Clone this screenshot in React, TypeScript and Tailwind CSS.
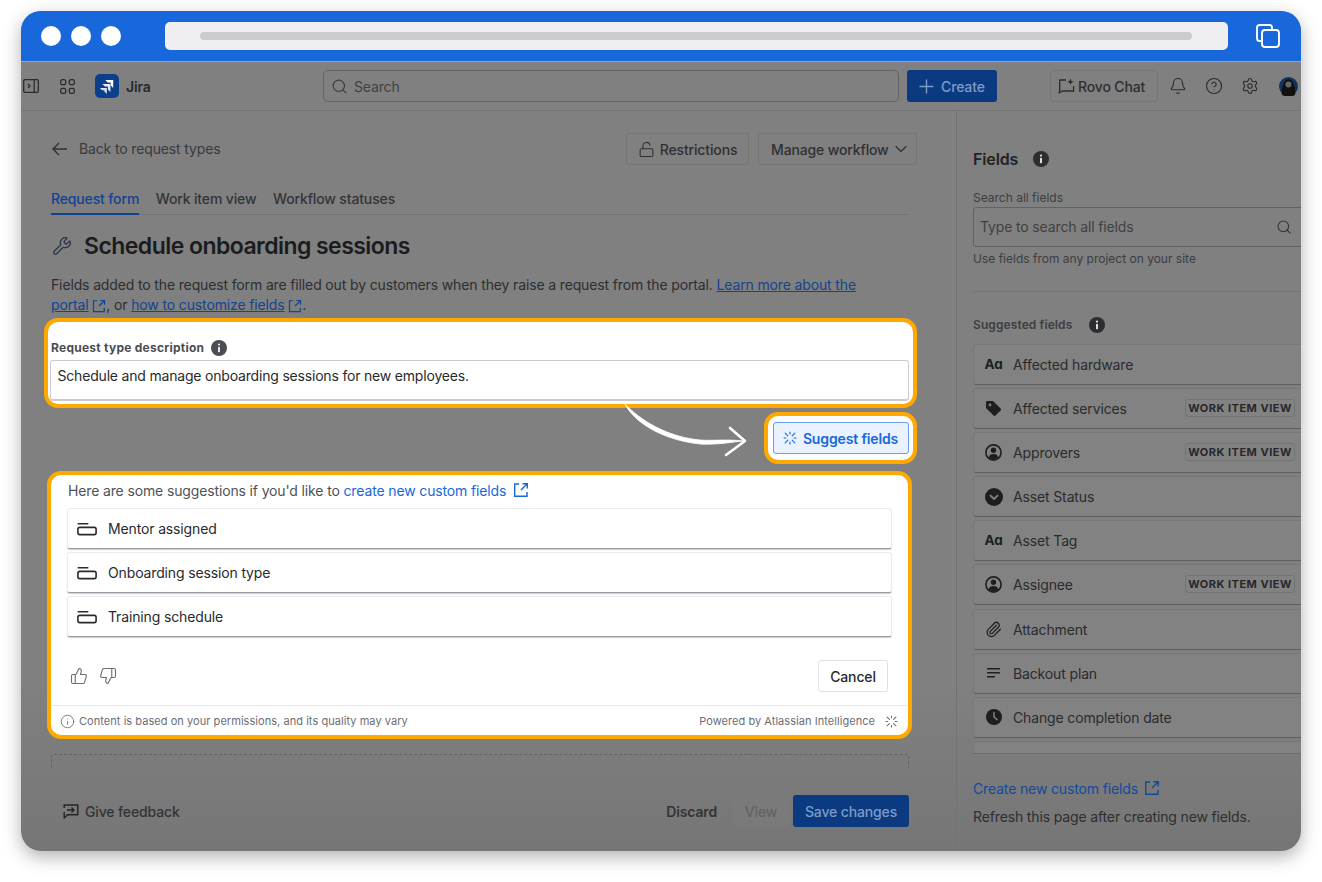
import React from "react";
import { ChevronDown, LockOpen, Search, Bell, CircleHelp, Settings, Wrench, ThumbsUp, ThumbsDown, Info, Paperclip } from "lucide-react";

const InfoSolid = ({ size = 16, color = "#2c2d30" }: { size?: number; color?: string }) => (
  <svg width={size} height={size} viewBox="0 0 16 16" className="shrink-0">
    <circle cx="8" cy="8" r="8" fill={color} />
    <circle cx="8" cy="4.6" r="1.1" fill="#fff" fillOpacity="0.85" />
    <rect x="7" y="6.8" width="2" height="5.4" rx="0.6" fill="#fff" fillOpacity="0.85" />
  </svg>
);

const AiIcon = ({ size = 14, color = "#1868DB" }: { size?: number; color?: string }) => (
  <svg width={size} height={size} viewBox="0 0 16 16" fill="none" stroke={color} strokeWidth="1.3" strokeLinecap="round" className="shrink-0">
    <path d="M2.5 2.5l3 3M13.5 2.5l-3 3M2.5 13.5l3-3M13.5 13.5l-3-3M8 1.2v2.2M8 12.6v2.2M1.2 8h2.2M12.6 8h2.2" />
  </svg>
);

const ExtLink = ({ size = 14, color = "#11458f", className = "" }: { size?: number; color?: string; className?: string }) => (
  <svg width={size} height={size} viewBox="0 0 16 16" fill="none" stroke={color} strokeWidth="1.4" className={"inline-block shrink-0 " + className}>
    <path d="M6 2H1.7v12.3h12.3V10" />
    <path d="M8 8l6-6M9.5 1.7h4.8v4.8" />
  </svg>
);

const FieldIcon = () => (
  <svg width="20" height="14" viewBox="0 0 20 14" fill="none" className="shrink-0">
    <rect x="0.5" y="1" width="11" height="1.6" rx="0.8" fill="#2a2b2e" />
    <rect x="0.9" y="5.4" width="18.2" height="7.2" rx="1.8" stroke="#2a2b2e" strokeWidth="1.6" />
  </svg>
);

const UserCircle = () => (
  <svg width="17" height="17" viewBox="0 0 17 17">
    <circle cx="8.5" cy="8.5" r="7.6" fill="none" stroke="#1d1e20" strokeWidth="1.6" />
    <circle cx="8.5" cy="6.2" r="2.7" fill="#1d1e20" />
    <path d="M3.6 13.5c.6-2.3 2.2-3.4 4.9-3.4s4.3 1.1 4.9 3.4a7.5 7.5 0 0 1-9.8 0z" fill="#1d1e20" />
  </svg>
);
const TagIcon = () => (
  <svg width="17" height="17" viewBox="0 0 17 17">
    <path d="M1 2.4C1 1.6 1.6 1 2.4 1H8l7.6 7.6c.5.5.5 1.3 0 1.8l-5.2 5.2c-.5.5-1.3.5-1.8 0L1 8z" fill="#1d1e20" />
    <circle cx="5" cy="5" r="1.4" fill="#808080" />
  </svg>
);
const ChevCircle = () => (
  <svg width="18" height="18" viewBox="0 0 18 18">
    <circle cx="9" cy="9" r="9" fill="#1d1e20" />
    <path d="M5.5 7.6L9 11l3.5-3.4" fill="none" stroke="#808080" strokeWidth="1.9" strokeLinecap="round" strokeLinejoin="round" />
  </svg>
);
const ClockSolid = () => (
  <svg width="16" height="16" viewBox="0 0 16 16">
    <circle cx="8" cy="8" r="8" fill="#1d1e20" />
    <path d="M8 3.6V8l3 2.6" fill="none" stroke="#808080" strokeWidth="1.5" strokeLinecap="round" />
  </svg>
);
const LinesIcon = () => (
  <svg width="14" height="10" viewBox="0 0 14 10" fill="#1d1e20">
    <rect width="13" height="1.5" rx="0.5" />
    <rect y="4" width="13" height="1.5" rx="0.5" />
    <rect y="8" width="8" height="1.5" rx="0.5" />
  </svg>
);
const AaIcon = () => <span className="font-bold text-[13.5px] text-[#1d1e20] leading-none tracking-[-0.3px]">Aɑ</span>;

const fields: { name: string; icon: React.ReactNode; badge?: boolean }[] = [
  { name: "Affected hardware", icon: <AaIcon /> },
  { name: "Affected services", icon: <TagIcon />, badge: true },
  { name: "Approvers", icon: <UserCircle />, badge: true },
  { name: "Asset Status", icon: <ChevCircle /> },
  { name: "Asset Tag", icon: <AaIcon /> },
  { name: "Assignee", icon: <UserCircle />, badge: true },
  { name: "Attachment", icon: <Paperclip size={17} color="#1d1e20" strokeWidth={1.7} /> },
  { name: "Backout plan", icon: <LinesIcon /> },
  { name: "Change completion date", icon: <ClockSolid /> },
];

const Nav = () => (
  <div className="h-[50px] flex items-center border-t border-b border-t-[#a3a3a3] border-b-[#737373] shrink-0 text-[14px]">
    <svg width="16" height="14" viewBox="0 0 16 14" fill="none" stroke="#2a2b2e" strokeWidth="1.3" className="ml-[2px] shrink-0">
      <rect x="0.7" y="0.7" width="14.6" height="12.6" rx="1.2" />
      <path d="M11.2 1v12M5 5l2 2-2 2" />
    </svg>
    <svg width="15" height="15" viewBox="0 0 15 15" fill="none" stroke="#2a2b2e" strokeWidth="1.3" className="ml-[21px] shrink-0">
      <rect x="0.7" y="0.7" width="5" height="5" rx="1.6" />
      <rect x="9.3" y="0.7" width="5" height="5" rx="1.6" />
      <rect x="0.7" y="9.3" width="5" height="5" rx="1.6" />
      <rect x="9.3" y="9.3" width="5" height="5" rx="1.6" />
    </svg>
    <svg width="24" height="24" viewBox="0 0 24 24" className="ml-[20px] shrink-0">
      <rect width="24" height="24" rx="5" fill="#0b3f8c" />
      <path d="M10.2 6h8v8l-2.5-2.5V8.500h-3z" fill="#fff" />
      <path d="M7.4 10h8v8l-2.500-2.500v-3h-3z" fill="#fff" opacity="0.9" />
      <path d="M4.800 14h7v6l-2.400-2.400v-1.300H7z" fill="#fff" opacity="0.85" />
    </svg>
    <span className="ml-[7px] font-semibold text-[#28292c] w-[197px]">Jira</span>
    <div className="w-[576px] h-8 rounded-[5px] border border-[#626365] flex items-center pl-[7px] gap-[6px] text-[#3f4043] shrink-0">
      <Search size={17} color="#3a3b3e" strokeWidth={1.6} />
      <span>Search</span>
    </div>
    <div className="ml-2 w-[90px] h-8 rounded-[3px] bg-[#0b3a80] flex items-center justify-start pl-3 gap-[7px] font-medium text-[#7e9bc7] shrink-0">
      <svg width="15" height="15" viewBox="0 0 15 15" stroke="#7e9bc7" strokeWidth="1.4" className="shrink-0">
        <path d="M7.500 0.500v14M0.500 7.500h14" />
      </svg>
      <span>Create</span>
    </div>
    <div className="ml-[53px] w-[108px] h-8 rounded-[3px] border border-[#757575] flex items-center pl-[7px] gap-[3px] font-medium text-[#2d2e31] shrink-0">
      <svg width="17" height="16" viewBox="0 0 17 16" fill="none" stroke="#2a2b2e" strokeWidth="1.3" className="shrink-0">
        <path d="M8 2H1.7v10.6L1 15l3.4-2h11.2V8" strokeLinejoin="round" />
        <path d="M12.5 0.5l.9 2.4 2.4.9-2.4.9-.9 2.4-.9-2.4-2.4-.9 2.4-.9z" fill="#2a2b2e" stroke="none" />
      </svg>
      <span>Rovo Chat</span>
    </div>
    <Bell size={18} color="#2a2b2e" strokeWidth={1.5} className="ml-[11px] shrink-0" />
    <CircleHelp size={18} color="#2a2b2e" strokeWidth={1.5} className="ml-[18px] shrink-0" />
    <Settings size={18} color="#2a2b2e" strokeWidth={1.5} className="ml-[18px] shrink-0" />
    <svg width="19" height="19" viewBox="0 0 19 19" className="ml-[20px] shrink-0">
      <circle cx="9.5" cy="9.5" r="9.5" fill="#12335f" />
      <path d="M3 18c-1-6 1-15 6.500-16 5.500 1 7.500 10 6.500 16-3 2-9 2-13 0z" fill="#111" />
      <circle cx="9.500" cy="7.500" r="3" fill="#686868" />
    </svg>
  </div>
);

const Left = () => (
  <div className="w-[936px] shrink-0 border-r border-[#727272] pl-[30px] pr-[47px] pt-[22px] text-[14px] text-[#333437]">
    <div className="h-8 flex items-center">
      <svg width="16" height="14" viewBox="0 0 16 14" fill="none" stroke="#2f3033" strokeWidth="1.4" className="ml-[1px] mb-[1px] shrink-0">
        <path d="M15 7H1.500M7 1L1 7l6 6" />
      </svg>
      <span className="ml-[11px] mb-[1px] text-[#393a3d]">Back to request types</span>
      <div className="ml-auto -mr-[8px] flex gap-[9px]">
        <div className="w-[123px] h-8 border border-[#757575] rounded-[3px] flex items-center justify-center gap-[5px] font-medium text-[#2f3033]">
          <LockOpen size={17} strokeWidth={1.5} />
          <span>Restrictions</span>
        </div>
        <div className="w-[159px] h-8 border border-[#757575] rounded-[3px] flex items-center pl-3 gap-[2px] font-medium text-[#2f3033]">
          <span>Manage workflow</span>
          <ChevronDown size={20} strokeWidth={1.4} />
        </div>
      </div>
    </div>
    <div className="mt-[23px] flex gap-[16.5px] border-b border-[#737373] h-[27px] font-medium">
      <div className="text-[#0f4294] border-b-2 border-[#0f4294] h-[27px] leading-[22px]">Request form</div>
      <div className="leading-[22px] text-[#333437]">Work item view</div>
      <div className="leading-[22px] text-[#333437]">Workflow statuses</div>
    </div>
    <div className="mt-[17px] flex items-center h-7">
      <Wrench size={20} color="#2b3547" strokeWidth={1.5} className="ml-[1px]" />
      <h1 className="ml-[12px] text-[23px] tracking-[-0.55px] leading-7 font-semibold text-[#1b1c1e]">Schedule onboarding sessions</h1>
    </div>
    <p className="mt-[15px] leading-5 text-[#2d2e31]">
      Fields added to the request form are filled out by customers when they raise a request from the portal.{" "}
      <span className="text-[#11458f] underline">Learn more about the</span>
      <br />
      <span className="text-[#11458f] underline">portal</span>{" "}
      <ExtLink />, or <span className="text-[#11458f] underline">how to customize fields</span>{" "}
      <ExtLink />.
    </p>

    <div className="mt-[3px] -ml-[7px] -mr-[8px] h-[90px] rounded-[14px] border-4 border-[#ffa900] bg-white pl-[2px] pr-[4px] relative">
      <div className="flex items-center gap-[7px] h-[19px] mt-[16px] pl-[1px] text-[12px] font-bold tracking-[0.25px] text-[#4b4d52]">
        <span>Request type description</span>
        <InfoSolid color="#4b4d55" />
      </div>
      <div className="mt-[3px] h-[41px] border border-[#c9cbd0] border-b-2 rounded-[3px] pl-[6.500px] pt-[4px] text-[14px] tracking-[-0.19px] text-[#292a2e]">
        Schedule and manage onboarding sessions for new employees.
      </div>
      <svg width="130" height="60" viewBox="0 0 130 60" fill="none" className="absolute left-[574px] top-[78px] z-10">
        <path d="M3 4C12 22 40 40 78 44C95 45 110 42 121 41C105 39 90 41 78 40C45 37 18 20 3 4Z" fill="#fff" stroke="#fff" strokeWidth="0.8" strokeLinejoin="round" />
        <path d="M108 28L123 41L104 55" stroke="#fff" strokeWidth="2.600" strokeLinecap="round" strokeLinejoin="round" />
      </svg>
    </div>

    <div className="mt-1 -mr-[8px] flex justify-end">
      <div className="w-[153px] h-[52px] rounded-[14px] border-4 border-[#ffa900] bg-white flex items-center justify-center">
        <div className="w-[136px] h-8 rounded-[3px] border border-[#669df1] bg-[#e9f2fe] flex items-center justify-center gap-[6px] text-[#1868db] font-semibold">
          <AiIcon />
          <span>Suggest fields</span>
        </div>
      </div>
    </div>

    <div className="mt-[7px] -ml-1 -mr-[3px] h-[268px] rounded-[14px] border-4 border-[#ffa900] bg-white flex flex-col">
      <div className="px-4">
        <div className="h-[20px] mt-[5px] pl-[1px] flex items-center text-[#505258]">
          Here are some suggestions if you'd like to&nbsp;<span className="text-[#1868db]">create new custom fields</span>
          <ExtLink size={16} color="#1868db" className="ml-[7px]" />
        </div>
        <div className="mt-[8px] flex flex-col gap-[3.100px]">
          {["Mentor assigned", "Onboarding session type", "Training schedule"].map((t) => (
            <div key={t} className="h-[41px] rounded-[3px] bg-white border border-[#ebecef] border-b-[#9a9ca2] shadow-[0_1px_1px_rgba(0,0,0,0.2)] flex items-center pl-[9px] gap-[11px] text-[#292a2e]">
              <FieldIcon />
              <span>{t}</span>
            </div>
          ))}
        </div>
        <div className="mt-[23px] h-8 flex items-center">
          <ThumbsUp size={18} color="#6b6e76" strokeWidth={1.5} className="ml-[3px]" />
          <ThumbsDown size={18} color="#6b6e76" strokeWidth={1.5} className="ml-[11px]" />
          <div className="ml-auto mr-[4px] w-[70px] h-8 border border-[#dfe1e6] rounded-[3px] flex items-center justify-center font-medium text-[#292a2e]">Cancel</div>
        </div>
      </div>
      <div className="mt-auto h-[30px] pt-[2px] border-t border-[#e8e9ec] flex items-center pl-[9px] pr-[10px] text-[11px] tracking-[0.05px] text-[#6b6e76]">
        <Info size={15} strokeWidth={1.4} />
        <span className="ml-[4px]">Content is based on your permissions, and its quality may vary</span>
        <span className="ml-auto mr-[10px]">Powered by Atlassian Intelligence</span>
        <AiIcon size={13} color="#6b6e76" />
      </div>
    </div>

    <div className="mt-[15px] h-[14px] border border-b-0 border-dashed border-[#646464] rounded-t-[3px]" />

    <div className="mt-[27px] h-8 flex items-center">
      <svg width="16" height="15" viewBox="0 0 16 15" fill="none" stroke="#242528" strokeWidth="1.4" className="ml-[12px]">
        <path d="M3 1h11.800v9.800H4.500L1.200 14V8M1.200 4V1H3" strokeLinejoin="round" />
        <path d="M4 6h7M8.500 3.500L11 6 8.500 8.500" />
      </svg>
      <span className="ml-[6px] font-medium text-[#333437]">Give feedback</span>
      <span className="ml-auto font-semibold text-[#333437]">Discard</span>
      <div className="ml-[16px] w-[56px] h-8 rounded-[3px] bg-[#7a7a7a] flex items-center justify-center font-medium text-[#626366]">View</div>
      <div className="ml-[4px] w-[116px] h-8 rounded-[3px] bg-[#0b3a80] flex items-center justify-center font-medium text-[#7e9bc7]">Save changes</div>
    </div>
  </div>
);

const Right = () => (
  <div className="flex-1 min-w-0 pl-4 text-[14px] text-[#2d2e31]">
    <div className="mt-[36px] h-6 flex items-center gap-[15px]">
      <span className="text-[16px] font-semibold text-[#222326]">Fields</span>
      <InfoSolid />
    </div>
    <div className="mt-[19px] h-[16px] leading-4 text-[12px] tracking-normal text-[#3d3e41]">Search all fields</div>
    <div className="mt-[1px] w-[340px] h-[40px] border border-[#626365] rounded-[3px] flex items-center pl-[6px] pr-[20px] text-[#3f4043]">
      <span className="mb-[1px]">Type to search all fields</span>
      <Search size={16} color="#333437" strokeWidth={1.6} className="ml-auto" />
    </div>
    <div className="mt-[4px] h-[16px] leading-4 text-[12px] tracking-normal text-[#3d3e41]">Use fields from any project on your site</div>
    <div className="mt-[24px] border-t border-[#737373] w-[340px]" />
    <div className="mt-[23px] h-5 flex items-center gap-[17px] text-[12px] font-semibold tracking-[0.1px] text-[#3d3e41]">
      <span>Suggested fields</span>
      <InfoSolid />
    </div>
    <div className="mt-[9px] h-[410px] overflow-hidden border-b border-[#6c6c6c] flex flex-col gap-[3.100px]">
      {fields.map((f) => (
        <div key={f.name} className="h-[41px] shrink-0 w-[340px] rounded-[3px] bg-[#828282] border border-[#787878] border-b-[#5f5f5f] flex items-center">
          <span className="w-[39px] flex justify-center shrink-0">{f.icon}</span>
          <span className="text-[#2a2b2e]">{f.name}</span>
          {f.badge && (
            <span className="ml-auto mr-[17px] -mt-[1px] h-[18px] w-[110px] border border-[#727272] rounded-[3px] flex items-center justify-center text-[11px] font-bold tracking-[0.5px] text-[#27282b]">WORK ITEM VIEW</span>
          )}
        </div>
      ))}
      <div className="h-[41px] shrink-0 w-[340px] rounded-[3px] bg-[#828282] border border-[#787878]" />
    </div>
    <div className="mt-[24px] h-5 flex items-center gap-[6px] text-[#134a9c]">
      <span>Create new custom fields</span>
      <ExtLink size={16} color="#134a9c" />
    </div>
    <div className="mt-[9px] h-5 leading-5">Refresh this page after creating new fields.</div>
  </div>
);

export default function App() {
  return (
    <div className="w-[1322px] h-[882px] bg-white pt-[11px] pl-[21px] overflow-hidden font-[Inter,sans-serif] tracking-[-0.14px]">
      <div className="w-[1280px] h-[840px] rounded-[20px] overflow-hidden shadow-[0_6px_18px_rgba(0,0,0,0.3)] bg-linear-to-b from-[#808080] from-80% to-[#767676] flex flex-col">
        <div className="h-[50px] shrink-0 bg-[#1868db] flex items-center pl-5">
          <div className="flex gap-[10px]">
            <div className="w-5 h-5 rounded-full bg-white" />
            <div className="w-5 h-5 rounded-full bg-white" />
            <div className="w-5 h-5 rounded-full bg-white" />
          </div>
          <div className="ml-[44px] w-[1063px] h-7 rounded-[5px] bg-[#efeff1] flex items-center pl-[35px]">
            <div className="w-[992px] h-2 rounded-full bg-[#cbcbd0]" />
          </div>
          <svg width="24" height="24" viewBox="0 0 24 24" fill="none" stroke="#fff" strokeWidth="1.900" className="ml-[28px]">
            <path d="M5.500 17H3.500A2.500 2.500 0 0 1 1 14.500V3.500A2.500 2.500 0 0 1 3.500 1h10A2.500 2.500 0 0 1 16 3.500V6" />
            <rect x="6" y="6" width="17" height="17" rx="3" />
          </svg>
        </div>
        <Nav />
        <div className="flex-1 flex min-h-0">
          <Left />
          <Right />
        </div>
      </div>
    </div>
  );
}
